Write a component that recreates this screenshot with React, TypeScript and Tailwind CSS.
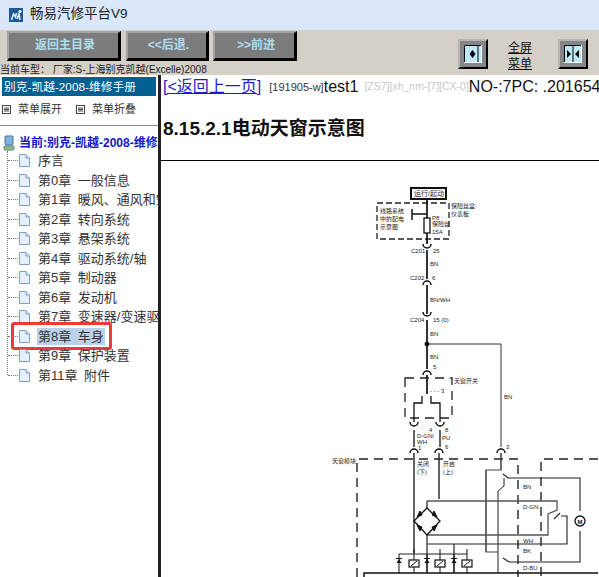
const chapters = [
  '序言',
  '第0章 一般信息',
  '第1章 暖风、通风和空调',
  '第2章 转向系统',
  '第3章 悬架系统',
  '第4章 驱动系统/轴',
  '第5章 制动器',
  '第6章 发动机',
  '第7章 变速器/变速驱动桥',
  '第8章 车身',
  '第9章 保护装置',
  '第11章 附件',
];

const cjk = "font-['Liberation_Sans','Noto_Sans_CJK_SC',sans-serif]";

function PageIcon() {
  return (
    <svg width="13" height="15" viewBox="0 0 13 15" className="shrink-0">
      <path d="M1.500 1.500h6.500l3.500 3.500v8.500h-10z" fill="#e6effb" stroke="#7f9fca" />
      <path d="M8 1.500v3.500h3.500" fill="#cfdff3" stroke="#7f9fca" />
    </svg>
  );
}

function MenuIcon() {
  return (
    <svg width="9" height="9" viewBox="0 0 9 9" className="shrink-0">
      <rect x="0.5" y="0.5" width="8" height="8" fill="#fff" stroke="#444" />
      <path d="M2 3h5M2 4.500h5M2 6h5" stroke="#444" />
    </svg>
  );
}

function ToolButton({ label, width }: { label: string; width: string }) {
  return (
    <button
      className={`${width} h-[30px] pb-[2px] pl-[3px] bg-[#7c7c7c] border-t-2 border-l-2 border-r-[3px] border-b-[3px] border-t-[#a4a4a4] border-l-[#a4a4a4] border-r-black border-b-black text-[12px] font-bold text-[#addcec]`}
    >
      {label}
    </button>
  );
}

function FrameButton({ double }: { double?: boolean }) {
  return (
    <button className="w-[30px] h-[30px] bg-[#868686] border-2 border-t-[#b5b5b5] border-l-[#b5b5b5] border-r-black border-b-black flex items-center justify-center">
      <svg width="18" height="18" viewBox="0 0 18 18">
        <rect width="18" height="18" fill="#bfe8fb" />
        <path d="M0.500 18V0.500H18" fill="none" stroke="#000" />
        <path d="M17.500 0V17.500H0" fill="none" stroke="#fff" />
        {double ? (
          <>
            <path d="M9 1v16" stroke="#000" />
            <path d="M3 5l4 4-4 4zM15 5l-4 4 4 4z" fill="#000" />
          </>
        ) : (
          <>
            <path d="M14 1v16" stroke="#000" />
            <path d="M8.500 5l3 4-3 4-3-4z" fill="#000" />
          </>
        )}
      </svg>
    </button>
  );
}

// 插头弧形: cup 为开口向上, 否则开口向下
function Conn({ x, y, cup }: { x: number; y: number; cup?: boolean }) {
  const d = cup ? `M${x - 4} ${y - 3}a4 4 0 0 0 8 0` : `M${x - 4} ${y + 3}a4 4 0 0 1 8 0`;
  return <path d={d} fill="none" stroke="#111" strokeWidth="1.500" />;
}

function Label({ x, y, children }: { x: number; y: number; children: string }) {
  return (
    <text x={x} y={y} fontSize="6" fill="#222" stroke="none">
      {children}
    </text>
  );
}

function Relay({ x }: { x: number }) {
  return (
    <g>
      <rect x={x - 5} y={560} width="10" height="7" fill="#fff" stroke="#111" strokeWidth="1.200" />
      <path d={`M${x - 3} 566l6-5`} stroke="#111" />
      <path d={`M${x} 549v11M${x} 567v6`} stroke="#111" />
    </g>
  );
}

function Diode({ x }: { x: number }) {
  return (
    <g>
      <path d={`M${x - 2.500} 563h5l-2.500-4z`} fill="#111" />
      <path d={`M${x} 554v19M${x - 3} 558.500h6`} stroke="#111" />
    </g>
  );
}

function WiringDiagram() {
  return (
    <svg
      width="437"
      height="416"
      viewBox="162 161 437 416"
      className="block font-['Liberation_Sans','Noto_Sans_CJK_SC',sans-serif]"
    >
      <g fill="none" stroke="#111" strokeWidth="1">
        {/* 电源 */}
        <rect x="412" y="188" width="35" height="11" strokeWidth="2" />
        <rect x="378" y="203" width="72" height="36" strokeDasharray="6 3" stroke="#222" strokeWidth="1.300" />
        <path d="M428 199v45M428 250v29M428 285v29M428 320v49M428 375v19" strokeWidth="1.700" />
        <rect x="425" y="218" width="6" height="15" fill="#fff" strokeWidth="1.300" />
        <path d="M413 209v11M413 214h15" strokeWidth="1.500" />
        <Conn x={428} y={247} cup />
        <Conn x={428} y={282} />
        <Conn x={428} y={315} cup />
        <Conn x={428} y={372} />
        <path d="M428 344h74v103M502 453v17" stroke="#333" />
        <circle cx="428" cy="344" r="2" fill="#111" />

        {/* 天窗开关 */}
        <rect x="406" y="378" width="47" height="40" strokeDasharray="9 6" stroke="#222" strokeWidth="1.300" />
        <path d="M423 396v7h-8v19M432 396v7h9v19" strokeWidth="1.300" />
        <Conn x={415} y={425} cup />
        <Conn x={441} y={425} cup />
        <path d="M415 430v17M441 430v17M415 453v100M440 453v46" strokeWidth="1.300" />
        <Conn x={415} y={450} />
        <Conn x={440} y={450} />
        <Conn x={502} y={450} />

        {/* 模块 */}
        <path d="M358 577V459h161v118" strokeDasharray="9 6" stroke="#222" strokeWidth="1.400" />
        <path d="M599 459h-57v118" strokeDasharray="9 6" stroke="#222" strokeWidth="1.400" />

        <path d="M502 453v17h-15v82h12M487 470h15" stroke="#444" strokeWidth="1.100" />
        <path d="M504 474l5 4h72v33M581 531v31h-71l-6-4" stroke="#222" strokeWidth="1.100" />
        <path d="M505 478v8l-6 5" stroke="#222" />
        <path d="M428 501h130v9l-9 4v21H428" stroke="#555" strokeWidth="1.300" />
        <path d="M428 544h140v-28h-6M555 519l6-6" stroke="#222" strokeWidth="1.100" />
        <path d="M487 470v82M499 491v82" stroke="#555" strokeWidth="1.300" />
        <path d="M428 501v7M428 535v38M455 544v29" stroke="#222" strokeWidth="1.200" />

        {/* 整流桥 */}
        <path d="M428 508l13 13-13 14-13-14z" strokeWidth="1.300" />
        <path d="M421 511l-3 6 5-2zM435 511l3 6-5-2zM421 531l-3-6 5 2zM435 531l3-6-5 2z" fill="#111" />

        <circle cx="581" cy="521" r="5" fill="#fff" strokeWidth="1.300" />

        <path d="M400 554h28M428 554h27M455 554h13" stroke="#222" />
        <path d="M365 577v-4h234" strokeWidth="1.500" />
      </g>

      <Diode x={400} />
      <Diode x={428} />
      <Diode x={455} />
      <Relay x={415} />
      <Relay x={441} />
      <Relay x={468} />

      <text x="415" y="196" fontSize="7" fill="#222">运行/起动</text>
      <Label x={381} y={213}>线路系统</Label>
      <Label x={381} y={221}>中的配电</Label>
      <Label x={381} y={229}>示意图</Label>
      <Label x={452} y={208}>保险丝盒-</Label>
      <Label x={452} y={216}>仪表板</Label>
      <Label x={433} y={220}>P8</Label>
      <Label x={433} y={226}>保险丝</Label>
      <Label x={433} y={234}>15A</Label>
      <Label x={412} y={253}>C201</Label>
      <Label x={434} y={253}>25</Label>
      <Label x={431} y={266}>BN</Label>
      <Label x={411} y={280}>C202</Label>
      <Label x={433} y={280}>6</Label>
      <Label x={431} y={302}>BN/WH</Label>
      <Label x={411} y={322}>C204</Label>
      <Label x={434} y={322}>15 (0)</Label>
      <Label x={431} y={336}>BN</Label>
      <Label x={431} y={359}>BN</Label>
      <Label x={434} y={369}>5</Label>
      <Label x={455} y={383}>天窗开关</Label>
      <Label x={431} y={393}>- - - 3</Label>
      <Label x={505} y={399}>BN</Label>
      <Label x={430} y={432}>4</Label>
      <Label x={446} y={432}>8</Label>
      <Label x={418} y={438}>D-GN/</Label>
      <Label x={418} y={444}>WH</Label>
      <Label x={443} y={440}>PU</Label>
      <Label x={419} y={450}>1</Label>
      <Label x={446} y={449}>6</Label>
      <Label x={507} y={449}>3</Label>
      <Label x={333} y={463}>天窗模块</Label>
      <Label x={418} y={466}>关闭</Label>
      <Label x={418} y={474}>(下)</Label>
      <Label x={444} y={466}>开启</Label>
      <Label x={444} y={474}>(上)</Label>
      <Label x={524} y={489}>BN</Label>
      <Label x={524} y={509}>D-GN</Label>
      <Label x={524} y={543}>WH</Label>
      <Label x={524} y={553}>BK</Label>
      <Label x={524} y={570}>D-BU</Label>
      <text x="578.500" y="523.500" fontSize="6" fill="#111" fontWeight="bold">M</text>
    </svg>
  );
}

export default function App() {
  return (
    <div className={`w-[599px] h-[577px] overflow-hidden bg-white flex flex-col ${cjk}`}>
      <div className="h-[30px] bg-[#d9e7f8] flex items-center pl-[9px] pb-[2px] gap-[7px] shrink-0">
        <svg width="14" height="14" viewBox="0 0 14 14" className="shrink-0 mt-[2px]">
          <rect width="14" height="14" fill="#1c5a95" />
          <path d="M2.500 12l2-6 2 3 1-4" stroke="#d8ecf8" strokeWidth="1.600" fill="none" />
          <path d="M8 11l2-5 1 6" stroke="#fff" strokeWidth="1.500" fill="none" />
          <circle cx="11" cy="3.500" r="1.500" fill="#fff" />
        </svg>
        <span className="text-[13.500px] text-[#222]">畅易汽修平台V9</span>
      </div>

      <div className="h-[45px] bg-[#d4d0c8] shrink-0 relative">
        <div className="flex items-start pt-px pl-[7px]">
          <ToolButton label="返回主目录" width="w-[114px]" />
          <div className="w-[5px]" />
          <ToolButton label="<<后退." width="w-[83px]" />
          <div className="w-[4px]" />
          <ToolButton label=">>前进" width="w-[84px]" />
          <div className="w-[161px]" />
          <div className="pt-[8px] flex items-start">
            <FrameButton />
            <div className="w-[70px] pr-[6px] pt-px text-center text-[12px] leading-[16px] text-[#111] underline">
              全屏
              <br />
              菜单
            </div>
            <FrameButton double />
          </div>
        </div>
        <div className="absolute left-0 bottom-0 text-[10px] leading-[11px] text-[#222]">
          当前车型： 厂家:S-上海别克凯越(Excelle)2008
        </div>
      </div>

      <div className="flex-1 flex min-h-0">
        <aside className="w-[158px] shrink-0 overflow-hidden pt-[2px]">
          <div className="mx-[2px] h-[19px] bg-[#00608f] text-white text-[11.750px] leading-[19px] pl-[2px] whitespace-nowrap overflow-hidden">
            别克-凯越-2008-维修手册
          </div>
          <div className="h-[30px] flex items-center pl-[2px] pb-[2px] text-[11px] text-[#333] border-b border-[#888] mb-[9px]">
            <MenuIcon />
            <span className="ml-[7px]">菜单展开</span>
            <span className="w-[14px]" />
            <MenuIcon />
            <span className="ml-[7px]">菜单折叠</span>
          </div>
          <div className="flex items-center pl-[3px] h-[16px] whitespace-nowrap">
            <svg width="12" height="16" viewBox="0 0 12 16" className="shrink-0">
              <rect x="2" y="1" width="8" height="9" rx="1" fill="#7fb0e0" stroke="#46719f" />
              <rect x="1" y="11" width="10" height="4" rx="1" fill="#8fb98f" stroke="#5c8a74" />
            </svg>
            <span className="ml-[4px] text-[12px] font-bold text-[#1414c8]">当前:别克-凯越-2008-维修手册</span>
          </div>
          <ul className="ml-[7px] border-l border-dotted border-[#777] h-[224px]">
            {chapters.map((name) => {
              const active = name === '第8章 车身';
              return (
                <li key={name} className="relative h-[19.500px] flex items-center whitespace-nowrap">
                  <span className="w-[10px] border-t border-dotted border-[#777] shrink-0" />
                  <PageIcon />
                  <span className={`ml-[6px] px-px text-[13px] leading-[17px] text-[#333] [word-spacing:3px] ${active ? 'bg-[#bcd0ea]' : ''}`}>
                    {name}
                  </span>
                  {active && (
                    <span className="absolute left-[3px] -top-[5px] w-[101px] h-[28px] border-[3px] border-[#ee3a3a] rounded-[3px]" />
                  )}
                </li>
              );
            })}
          </ul>
        </aside>

        <main className="flex-1 min-w-0 border-l-[3px] border-l-[#222] overflow-hidden">
          <div className="h-[24px] pl-[2px] flex items-center whitespace-nowrap text-[#111]">
            <span className="text-[16px]">
              <a className="text-[#1c1ccc] underline">[&lt;返回上一页]</a>
            </span>
            <span className="ml-[8px] text-[11px] text-[#333]">[191905-w]</span>
            <span className="text-[16px]">test1</span>
            <span className="ml-[6px] text-[10.500px] text-[#c8c8c8]">[ZS7][xh_nm-[7][CX-0]</span>
            <span className="text-[16px]">NO-:7PC: .20165487</span>
          </div>
          <h1 className="mt-[17px] pl-[2px] text-[19px] leading-[26px] font-bold text-[#111] whitespace-nowrap">
            8.15.2.1电动天窗示意图
          </h1>
          <div className="mt-[18px] border-t border-black">
            <WiringDiagram />
          </div>
        </main>
      </div>
    </div>
  );
}
